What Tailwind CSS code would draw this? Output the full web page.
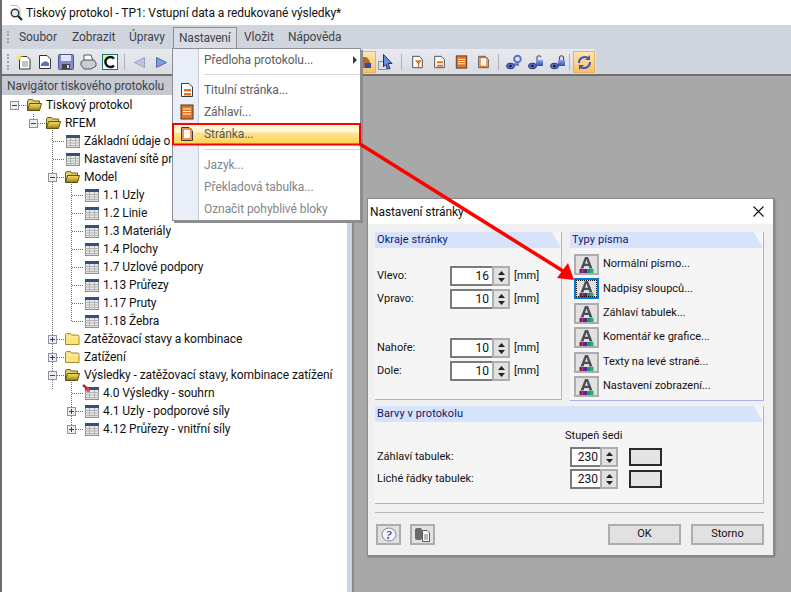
<!DOCTYPE html>
<html lang="cs">
<head>
<meta charset="utf-8">
<script src="https://cdn.jsdelivr.net/npm/@tailwindcss/browser@4"></script>
</head>
<body class="m-0">
<svg class="absolute w-0 h-0" width="0" height="0">
  <defs>
    <linearGradient id="fy" x1="0" y1="0" x2="0" y2="1"><stop offset="0" stop-color="#f2da6e"/><stop offset=".55" stop-color="#cdb036"/><stop offset="1" stop-color="#857117"/></linearGradient>
    <linearGradient id="fb" x1="0" y1="0" x2="0" y2="1"><stop offset="0" stop-color="#8ea6ea"/><stop offset="1" stop-color="#2f49b0"/></linearGradient>
    <symbol id="fopen" viewBox="0 0 16 14"><path d="M1.500 12.500V3l1-1.500h4l1 1.500h6v2.500" fill="#e2cd62" stroke="#6e5f18"/><path d="M1.500 12.500L3.500 5.500H15.500L13.500 12.500Z" fill="url(#fy)" stroke="#5f5113"/></symbol>
    <symbol id="fclosed" viewBox="0 0 16 14"><path d="M1.500 12.500V2.500l1-1h4l1 1.500h6.500l1 1v8.500Z" fill="#fbe27a" stroke="#a68c2c"/><path d="M2.500 5h12" stroke="#fff3b5"/></symbol>
    <symbol id="table" viewBox="0 0 14 13"><rect x=".5" y=".5" width="13" height="12" fill="#e9e9e9" stroke="#8a8a8a"/><rect x="0" y="0" width="14" height="3" fill="#34507c"/><path d="M0 5.500h14M0 8h14M0 10.500h14M4.500 3v10M9.500 3v10" stroke="#b2b2b2"/></symbol>
    <symbol id="plus" viewBox="0 0 9 9"><rect x=".5" y=".5" width="8" height="8" fill="#eceef3" stroke="#8f939b"/><path d="M2 4.500h5M4.500 2v5" stroke="#2c3f86"/></symbol>
    <symbol id="minus" viewBox="0 0 9 9"><rect x=".5" y=".5" width="8" height="8" fill="#eceef3" stroke="#8f939b"/><path d="M2 4.500h5" stroke="#2c3f86"/></symbol>
    <symbol id="fonticon" viewBox="0 0 17 17"><path d="M2.500 12.500L7 1H10L14.500 12.500H11.500L10.700 10H6.300L5.500 12.500ZM7 7.800H10L8.500 3.500Z" fill="#4a5058"/><rect x="1.500" y="13" width="3" height="4" fill="#8e1b3b"/><rect x="4.500" y="13" width="2.500" height="4" fill="#7d1f8c"/><rect x="7" y="13" width="2.500" height="4" fill="#3a22b0"/><rect x="9.500" y="13" width="2.500" height="4" fill="#188f72"/><rect x="12" y="13" width="3.500" height="4" fill="#23b063"/></symbol>
    <symbol id="up" viewBox="0 0 7 4"><path d="M3.500 0L7 4H0Z" fill="#222"/></symbol>
    <symbol id="docline" viewBox="0 0 14 16"><path d="M1.500 1.500H9L12.500 5V14.500H1.500Z" fill="#fff" stroke="#3b3b3b"/></symbol>
    <symbol id="link" viewBox="0 0 16 16"><ellipse cx="4.500" cy="12" rx="4" ry="2.800" fill="#5d74cf" stroke="#29346b"/><circle cx="4.500" cy="12" r="1.300" fill="#111"/><path d="M8 10.500h5" stroke="#5d74cf" stroke-width="2.500"/></symbol>
  </defs>
</svg>

<div class="relative w-[791px] h-[592px] overflow-hidden bg-[#a8a8a8] flex flex-col border-l-2 border-[#6e6e6e] font-['Roboto','Liberation_Sans',sans-serif] text-[12px] text-[#111]">
  <!-- title bar -->
  <div class="h-[25px] shrink-0 bg-white flex items-center pl-[6px]">
    <svg class="w-[16px] h-[18px]" viewBox="0 0 16 18"><path d="M2.500 1.500H9L12 4.500V13" fill="#fff" stroke="#b9b9b9"/><circle cx="7" cy="9" r="3.800" fill="#dcecf7" stroke="#333" stroke-width="1.400"/><path d="M10 12l4 4" stroke="#222" stroke-width="2.200"/></svg>
    <span class="ml-[2px] tracking-[-.07px] whitespace-nowrap">Tiskový protokol - TP1: Vstupní data a redukované výsledky*</span>
  </div>
  <!-- menu bar -->
  <div class="h-[24px] shrink-0 bg-[#d0d4dd] flex items-center text-[#40444a] pl-[5px]">
    <span class="w-[2px] h-[12px] mr-[10px] border-l-2 border-dotted border-[#9da2ac]"></span>
    <span class="w-[53px] tracking-[-.05px]">Soubor</span>
    <span class="w-[57px] tracking-[-.05px]">Zobrazit</span>
    <span class="w-[115px] tracking-[-.05px]">Úpravy</span>
    <span class="w-[44px] tracking-[-.05px]">Vložit</span>
    <span class="tracking-[-.07px]">Nápověda</span>
  </div>
  <!-- toolbar -->
  <div class="h-[26px] shrink-0 bg-[#d0d4dd]">
    <div class="h-[26px] w-[594px] rounded-tr-[3px] bg-gradient-to-b from-[#e8eaef] to-[#d8dbe2] flex items-center pl-[5px]">
      <span class="w-[2px] h-[16px] mr-[7px] border-l-2 border-dotted border-[#9da2ac]"></span>
      <svg class="w-[16px] h-[16px] mr-[6px]" viewBox="0 0 16 16"><path d="M3.500 2.500H11L14 5.500V15H3.500Z" fill="#fff" stroke="#333"/><path d="M6 8h6M6 10h6M6 12h6" stroke="#888"/><path d="M3.500 0L4.500 2.500 7 2.500 5 4.500 6 7 3.500 5.500 1 7 2 4.500 0 2.500 2.500 2.500Z" fill="#f6e94b"/></svg>
      <svg class="w-[14px] h-[16px] mr-[6px]" viewBox="0 0 14 16"><path d="M1.500 1.500H9L12.500 5V14.500H1.500Z" fill="#fff" stroke="#333"/><path d="M3 10q4-5 8-1v3H3Z" fill="#5577b5"/></svg>
      <svg class="w-[16px] h-[16px] mr-[6px]" viewBox="0 0 16 16"><rect x=".5" y=".5" width="15" height="15" rx="1" fill="#7f89d0" stroke="#4e5690"/><rect x="3" y="1" width="10" height="6" fill="#e3e5f4"/><rect x="4" y="10" width="8" height="5" fill="#444"/><rect x="9" y="11" width="2" height="3" fill="#ddd"/></svg>
      <svg class="w-[17px] h-[16px] mr-[5px]" viewBox="0 0 17 16"><path d="M4 1h7l2 6H4Z" fill="#fff" stroke="#555"/><path d="M1 8l3-2h10l2 3v3l-5 3H4L1 11Z" fill="#c9ccd4" stroke="#555"/></svg>
      <svg class="w-[16px] h-[16px]" viewBox="0 0 16 16"><rect x=".5" y=".5" width="15" height="15" fill="#fff" stroke="#0f7a78"/><path d="M1 1h6L1 8Z" fill="#f1ee65"/><path d="M12 4.500A5 5 0 1 0 12 11.500" fill="none" stroke="#111" stroke-width="2.500"/></svg>
      <span class="w-px h-[16px] bg-[#aeb2ba] ml-[6px] mr-[9px]"></span>
      <svg class="w-[11px] h-[11px] mr-[11px]" viewBox="0 0 11 11"><path d="M10.500 .5V10.500L.5 5.500Z" fill="#b9c6e6" stroke="#9aa3b5"/></svg>
      <svg class="w-[11px] h-[11px]" viewBox="0 0 11 11"><path d="M.5 .5V10.500L10.500 5.500Z" fill="#7c9be6" stroke="#56679a"/></svg>
      <!-- right part -->
      <span class="ml-auto flex items-center">
        <span class="w-[13px] h-[22px] mr-[2px] border border-l-0 border-[#e6b45c] bg-gradient-to-b from-[#ffe6ae] to-[#f9bf67] flex items-center">
          <svg class="w-[10px] h-[16px]" viewBox="0 0 10 16"><path d="M0 3h3q5 3 5 11H0Z" fill="#a5702c"/><path d="M2 9h6v5H2Z" fill="#2f49b0"/></svg>
        </span>
        <svg class="w-[16px] h-[16px] mr-[7px]" viewBox="0 0 16 16"><path d="M.5 7.500h8v8h-8Z" fill="#e1e1e1" stroke="#8d8d8d"/><path d="M5.500 0.500L14 9.500 10 9.500 12 14.500 9.500 15 8 10.500 5.500 13Z" fill="#6f8ddf" stroke="#1a2e66"/></svg>
        <span class="w-px h-[16px] bg-[#aeb2ba] mr-[9px]"></span>
        <svg class="w-[13px] h-[14px] mr-[9px]" viewBox="0 0 14 16"><use href="#docline"/><path d="M4 6h8L9 10v4H7.500v-4Z" fill="#e8731a"/></svg>
        <svg class="w-[13px] h-[14px] mr-[9px]" viewBox="0 0 14 16"><use href="#docline"/><path d="M4 7h7v2.500H4ZM4 11h7v2.500H4Z" fill="#e8731a"/></svg>
        <svg class="w-[13px] h-[14px] mr-[9px]" viewBox="0 0 14 16"><rect x="1" y="1" width="12" height="14" fill="#e8731a" stroke="#3b3b3b"/><path d="M3 5h8M3 7.500h8M3 10h8" stroke="#fff"/></svg>
        <svg class="w-[13px] h-[14px] mr-[8px]" viewBox="0 0 14 16"><use href="#docline"/><rect x="3" y="3" width="8" height="10" fill="#fff" stroke="#e8731a" stroke-width="1.500"/></svg>
        <span class="w-px h-[16px] bg-[#aeb2ba] mr-[7px]"></span>
        <svg class="w-[16px] h-[16px] mr-[6px]" viewBox="0 0 16 16"><use href="#link"/><circle cx="11.500" cy="5" r="3.300" fill="none" stroke="#5d74cf" stroke-width="2"/></svg>
        <svg class="w-[16px] h-[16px] mr-[6px]" viewBox="0 0 16 16"><use href="#link"/><rect x="8" y="6" width="7" height="6" fill="url(#fb)"/><path d="M9 6V3q2-2.500 4 0" fill="none" stroke="#555" stroke-width="1.200"/></svg>
        <svg class="w-[16px] h-[16px] mr-[3px]" viewBox="0 0 16 16"><use href="#link"/><rect x="8" y="6" width="7" height="6" fill="url(#fb)"/><path d="M9.500 6V3q2-2.500 4 0v3" fill="none" stroke="#555" stroke-width="1.200"/></svg>
        <span class="w-px h-[16px] bg-[#aeb2ba] mr-[3px]"></span>
        <span class="w-[22px] h-[22px] mr-[1px] border border-[#e6b45c] bg-gradient-to-b from-[#ffe6ae] to-[#f9bf67] flex items-center justify-center">
          <svg class="w-[17px] h-[17px]" viewBox="0 0 17 17"><path d="M3 9a6 6 0 0 1 10-4.500M14 8a6 6 0 0 1-10 4.500" fill="none" stroke="#3f59b8" stroke-width="2"/><path d="M14 1v5h-5ZM3 16v-5h5Z" fill="#3f59b8"/></svg>
        </span>
      </span>
    </div>
  </div>
  <!-- main -->
  <div class="flex-1 flex border-t-2 border-[#6f6f6f] min-h-0 -mt-[1px]">
    <div class="w-[350px] shrink-0 flex flex-col bg-white">
      <div class="h-[19px] shrink-0 bg-[#c5c9d2] text-[#40444a] flex items-center pl-[5px] tracking-[-.09px]">Navigátor tiskového protokolu</div>
      <div class="relative flex-1 flex pt-[1px]">
        <svg class="absolute left-0 top-0 w-[350px] h-[497px]" viewBox="2 95 350 497" shape-rendering="crispEdges">
          <path d="M33.500 114V119M52.500 128V371M52.500 380V389M71.500 182V321M71.500 380V429M19 105.500H26M38 123.500H45M53 141.500H65M53 159.500H65M57 177.500H64M57 339.500H64M57 357.500H64M57 375.500H64M72 195.500H84M72 213.500H84M72 231.500H84M72 249.500H84M72 267.500H84M72 285.500H84M72 303.500H84M72 321.500H84M72 393.500H84M76 411.500H84M76 429.500H84" fill="none" stroke="#6f6f6f" stroke-dasharray="1 1"/>
        </svg>
        <div class="relative flex-1 flex flex-col whitespace-nowrap text-[#111] tracking-[-.08px]">
          <div class="flex items-center h-[18px] pl-[8px]"><svg class="w-[9px] h-[9px]"><use href="#minus"/></svg><svg class="ml-[7px] w-[16px] h-[14px]"><use href="#fopen"/></svg><span class="ml-[4px]">Tiskový protokol</span></div>
          <div class="flex items-center h-[18px] pl-[27px]"><svg class="w-[9px] h-[9px]"><use href="#minus"/></svg><svg class="ml-[7px] w-[16px] h-[14px]"><use href="#fopen"/></svg><span class="ml-[4px]">RFEM</span></div>
          <div class="flex items-center h-[18px] pl-[64px]"><svg class="w-[14px] h-[13px]"><use href="#table"/></svg><span class="ml-[4px]">Základní údaje o modelu</span></div>
          <div class="flex items-center h-[18px] pl-[64px]"><svg class="w-[14px] h-[13px]"><use href="#table"/></svg><span class="ml-[4px]">Nastavení sítě prvků</span></div>
          <div class="flex items-center h-[18px] pl-[46px]"><svg class="w-[9px] h-[9px]"><use href="#minus"/></svg><svg class="ml-[7px] w-[16px] h-[14px]"><use href="#fopen"/></svg><span class="ml-[4px]">Model</span></div>
          <div class="flex items-center h-[18px] pl-[83px]"><svg class="w-[14px] h-[13px]"><use href="#table"/></svg><span class="ml-[4px]">1.1 Uzly</span></div>
          <div class="flex items-center h-[18px] pl-[83px]"><svg class="w-[14px] h-[13px]"><use href="#table"/></svg><span class="ml-[4px]">1.2 Linie</span></div>
          <div class="flex items-center h-[18px] pl-[83px]"><svg class="w-[14px] h-[13px]"><use href="#table"/></svg><span class="ml-[4px]">1.3 Materiály</span></div>
          <div class="flex items-center h-[18px] pl-[83px]"><svg class="w-[14px] h-[13px]"><use href="#table"/></svg><span class="ml-[4px]">1.4 Plochy</span></div>
          <div class="flex items-center h-[18px] pl-[83px]"><svg class="w-[14px] h-[13px]"><use href="#table"/></svg><span class="ml-[4px]">1.7 Uzlové podpory</span></div>
          <div class="flex items-center h-[18px] pl-[83px]"><svg class="w-[14px] h-[13px]"><use href="#table"/></svg><span class="ml-[4px]">1.13 Průřezy</span></div>
          <div class="flex items-center h-[18px] pl-[83px]"><svg class="w-[14px] h-[13px]"><use href="#table"/></svg><span class="ml-[4px]">1.17 Pruty</span></div>
          <div class="flex items-center h-[18px] pl-[83px]"><svg class="w-[14px] h-[13px]"><use href="#table"/></svg><span class="ml-[4px]">1.18 Žebra</span></div>
          <div class="flex items-center h-[18px] pl-[46px]"><svg class="w-[9px] h-[9px]"><use href="#plus"/></svg><svg class="ml-[7px] w-[16px] h-[14px]"><use href="#fclosed"/></svg><span class="ml-[4px]">Zatěžovací stavy a kombinace</span></div>
          <div class="flex items-center h-[18px] pl-[46px]"><svg class="w-[9px] h-[9px]"><use href="#plus"/></svg><svg class="ml-[7px] w-[16px] h-[14px]"><use href="#fclosed"/></svg><span class="ml-[4px]">Zatížení</span></div>
          <div class="flex items-center h-[18px] pl-[46px]"><svg class="w-[9px] h-[9px]"><use href="#minus"/></svg><svg class="ml-[7px] w-[16px] h-[14px]"><use href="#fopen"/></svg><span class="ml-[4px]">Výsledky - zatěžovací stavy, kombinace zatížení</span></div>
          <div class="flex items-center h-[18px] pl-[83px]"><span class="relative"><svg class="block w-[14px] h-[13px]"><use href="#table"/></svg><svg class="absolute -left-[3px] -top-[3px] w-[9px] h-[9px]" viewBox="0 0 9 9"><path d="M1 1l6 5" stroke="#b8293a" stroke-width="2.500"/><circle cx="6" cy="6" r="2" fill="#d84a55"/></svg></span><span class="ml-[4px]">4.0 Výsledky - souhrn</span></div>
          <div class="flex items-center h-[18px] pl-[65px]"><svg class="w-[9px] h-[9px]"><use href="#plus"/></svg><svg class="ml-[9px] w-[14px] h-[13px]"><use href="#table"/></svg><span class="ml-[4px]">4.1 Uzly - podporové síly</span></div>
          <div class="flex items-center h-[18px] pl-[65px]"><svg class="w-[9px] h-[9px]"><use href="#plus"/></svg><svg class="ml-[9px] w-[14px] h-[13px]"><use href="#table"/></svg><span class="ml-[4px]">4.12 Průřezy - vnitřní síly</span></div>
        </div>
        <div class="w-[5px] shrink-0 bg-[#cdd3df]"></div>
      </div>
    </div>
    <div class="flex-1 border-l-2 border-[#8a8a8a]"></div>
  </div>

  <!-- open menu -->
  <div class="absolute left-[171px] top-[27px] w-[64px] h-[22px] bg-[#d9dce3] border border-b-0 border-[#8d8f94] text-[#40444a] pl-[5px] leading-[20px] tracking-[-.2px] z-10">Nastavení</div>
  <div class="absolute left-[170px] top-[48px] w-[189px] h-[173px] bg-white border border-[#8d8f94] text-[#54585f] shadow-[2px_2px_0_#8d8d8d] z-10">
    <div class="absolute left-0 top-0 bottom-0 w-[26px] bg-[#e9eef8] border-r border-[#c7cbd2]"></div>
    <div class="relative flex flex-col tracking-[-.07px]">
      <div class="h-[22px] flex items-center pl-[31px] text-[#5a5e66]">Předloha protokolu...<span class="ml-auto mr-[3px] w-0 h-0 border-y-[4px] border-y-transparent border-l-[4px] border-l-[#3a3a3a]"></span></div>
      <div class="ml-[31px] h-px bg-[#d5d7db] mt-[3px] mb-[4px]"></div>
      <div class="h-[22px] flex items-center text-[#5a5e66]"><svg class="ml-[7px] w-[14px] h-[16px]" viewBox="0 0 14 16"><use href="#docline"/><path d="M4 7h7v2.500H4ZM4 11h7v2.500H4Z" fill="#e8731a"/></svg><span class="ml-[10px]">Titulní stránka...</span></div>
      <div class="h-[22px] flex items-center text-[#5a5e66]"><svg class="ml-[7px] w-[14px] h-[16px]" viewBox="0 0 14 16"><rect x="1" y="1" width="12" height="14" fill="#e8731a" stroke="#3b3b3b"/><path d="M3 5h8M3 7.500h8M3 10h8" stroke="#fff"/></svg><span class="ml-[10px]">Záhlaví...</span></div>
      <div class="h-[21px] flex items-center bg-gradient-to-b from-[#fff6d4] from-40% via-[#fde28f] via-50% to-[#ffd24a] text-[#54585f]"><svg class="ml-[7px] w-[14px] h-[16px]" viewBox="0 0 14 16"><use href="#docline"/><rect x="3" y="3" width="8" height="10" fill="#fff" stroke="#e8731a" stroke-width="1.500"/></svg><span class="ml-[10px]">Stránka...</span></div>
      <div class="ml-[31px] h-px bg-[#d5d7db] mt-[5px] mb-[3px]"></div>
      <div class="h-[22px] flex items-center pl-[31px] text-[#82858b] mt-[1px]">Jazyk...</div>
      <div class="h-[22px] flex items-center pl-[31px] text-[#82858b]">Překladová tabulka...</div>
      <div class="h-[22px] flex items-center pl-[31px] text-[#82858b]">Označit pohyblivé bloky</div>
    </div>
  </div>

  <!-- dialog -->
  <div class="absolute left-[365px] top-[198px] w-[407px] h-[358px] bg-[#f0f0f0] border border-[#8b8b8b] shadow-[1px_1px_2px_#777] flex flex-col z-20 text-[#111] text-[11px]">
    <div class="h-[25px] shrink-0 bg-white flex items-center pl-[2px] pr-[9px] text-[12px] tracking-[-.1px]">
      <span>Nastavení stránky</span>
      <svg class="ml-auto w-[11px] h-[11px]" viewBox="0 0 11 11"><path d="M.5 .5L10.500 10.500M10.500 .5L.5 10.500" stroke="#111" stroke-width="1.100"/></svg>
    </div>
    <div class="flex gap-[8px] pl-[7px] pt-[8px]">
      <div class="w-[187px] h-[168px] bg-[#f5f5f5] border-r border-b border-[#aab0e6] flex flex-col">
        <div class="h-[16px] bg-[#d7e3fb] text-[#14146e] pl-[2px] leading-[16px] [clip-path:polygon(0_0,calc(100%-9px)_0,100%_100%,0_100%)] tracking-[.1px]">Okraje stránky</div>
        <div class="flex items-center h-[20px] mt-[18px] pl-[2px]"><span class="w-[73px]">Vlevo:</span><span class="w-[42px] h-[20px] bg-white border-2 border-r-0 border-[#7a7a7a] flex items-center justify-end pr-[3px] text-[12px]">16</span><span class="w-[18px] h-[20px] border-2 border-[#adadad] bg-[#e1e1e1] flex flex-col items-center justify-around py-[1px]"><svg class="w-[7px] h-[4px]"><use href="#up"/></svg><svg class="w-[7px] h-[4px] rotate-180"><use href="#up"/></svg></span><span class="ml-[4px]">[mm]</span></div>
        <div class="flex items-center h-[20px] mt-[3px] pl-[2px]"><span class="w-[73px]">Vpravo:</span><span class="w-[42px] h-[20px] bg-white border-2 border-r-0 border-[#7a7a7a] flex items-center justify-end pr-[3px] text-[12px]">10</span><span class="w-[18px] h-[20px] border-2 border-[#adadad] bg-[#e1e1e1] flex flex-col items-center justify-around py-[1px]"><svg class="w-[7px] h-[4px]"><use href="#up"/></svg><svg class="w-[7px] h-[4px] rotate-180"><use href="#up"/></svg></span><span class="ml-[4px]">[mm]</span></div>
        <div class="flex items-center h-[20px] mt-[29px] pl-[2px]"><span class="w-[73px]">Nahoře:</span><span class="w-[42px] h-[20px] bg-white border-2 border-r-0 border-[#7a7a7a] flex items-center justify-end pr-[3px] text-[12px]">10</span><span class="w-[18px] h-[20px] border-2 border-[#adadad] bg-[#e1e1e1] flex flex-col items-center justify-around py-[1px]"><svg class="w-[7px] h-[4px]"><use href="#up"/></svg><svg class="w-[7px] h-[4px] rotate-180"><use href="#up"/></svg></span><span class="ml-[4px]">[mm]</span></div>
        <div class="flex items-center h-[20px] mt-[3px] pl-[2px]"><span class="w-[73px]">Dole:</span><span class="w-[42px] h-[20px] bg-white border-2 border-r-0 border-[#7a7a7a] flex items-center justify-end pr-[3px] text-[12px]">10</span><span class="w-[18px] h-[20px] border-2 border-[#adadad] bg-[#e1e1e1] flex flex-col items-center justify-around py-[1px]"><svg class="w-[7px] h-[4px]"><use href="#up"/></svg><svg class="w-[7px] h-[4px] rotate-180"><use href="#up"/></svg></span><span class="ml-[4px]">[mm]</span></div>
      </div>
      <div class="w-[194px] h-[169px] bg-[#f5f5f5] border-r border-b border-[#aab0e6] flex flex-col">
        <div class="h-[16px] bg-[#d7e3fb] text-[#14146e] pl-[2px] leading-[16px] [clip-path:polygon(0_0,calc(100%-9px)_0,100%_100%,0_100%)] tracking-[.1px]">Typy písma</div>
        <div class="flex flex-col gap-[3.400px] pl-[4px] pt-[6px]">
          <div class="flex items-center"><span class="w-[25px] h-[21px] bg-[#e1e1e1] border-2 border-[#adadad] flex items-center justify-center"><svg class="w-[17px] h-[17px]"><use href="#fonticon"/></svg></span><span class="ml-[4px]">Normální písmo...</span></div>
          <div class="flex items-center"><span class="w-[25px] h-[21px] bg-[#e1e1e1] border-2 border-[#0078d7] outline-1 -outline-offset-3 outline-dotted outline-[#111] flex items-center justify-center"><svg class="w-[17px] h-[17px]"><use href="#fonticon"/></svg></span><span class="ml-[4px]">Nadpisy sloupců...</span></div>
          <div class="flex items-center"><span class="w-[25px] h-[21px] bg-[#e1e1e1] border-2 border-[#adadad] flex items-center justify-center"><svg class="w-[17px] h-[17px]"><use href="#fonticon"/></svg></span><span class="ml-[4px]">Záhlaví tabulek...</span></div>
          <div class="flex items-center"><span class="w-[25px] h-[21px] bg-[#e1e1e1] border-2 border-[#adadad] flex items-center justify-center"><svg class="w-[17px] h-[17px]"><use href="#fonticon"/></svg></span><span class="ml-[4px]">Komentář ke grafice...</span></div>
          <div class="flex items-center"><span class="w-[25px] h-[21px] bg-[#e1e1e1] border-2 border-[#adadad] flex items-center justify-center"><svg class="w-[17px] h-[17px]"><use href="#fonticon"/></svg></span><span class="ml-[4px]">Texty na levé straně...</span></div>
          <div class="flex items-center"><span class="w-[25px] h-[21px] bg-[#e1e1e1] border-2 border-[#adadad] flex items-center justify-center"><svg class="w-[17px] h-[17px]"><use href="#fonticon"/></svg></span><span class="ml-[4px]">Nastavení zobrazení...</span></div>
        </div>
      </div>
    </div>
    <div class="ml-[7px] mt-[5px] w-[389px] h-[98px] bg-[#f5f5f5] border-r border-b border-[#aab0e6] flex flex-col relative">
      <div class="h-[16px] bg-[#d7e3fb] text-[#14146e] pl-[2px] leading-[16px] [clip-path:polygon(0_0,calc(100%-9px)_0,100%_100%,0_100%)] tracking-[.1px]">Barvy v protokolu</div>
      <div class="pl-[190px] h-[25px] leading-[28px]">Stupeň šedi</div>
      <div class="flex items-center h-[20px] pl-[2px]"><span class="w-[193px]">Záhlaví tabulek:</span><span class="w-[30px] h-[20px] bg-white border-2 border-r-0 border-[#7a7a7a] flex items-center justify-end pr-[2px] text-[12px]">230</span><span class="w-[18px] h-[20px] border-2 border-[#adadad] bg-[#e1e1e1] flex flex-col items-center justify-around py-[1px]"><svg class="w-[7px] h-[4px]"><use href="#up"/></svg><svg class="w-[7px] h-[4px] rotate-180"><use href="#up"/></svg></span><span class="ml-[11px] w-[33px] h-[18px] bg-[#e4e4e4] border-2 border-[#2a2a2a]"></span></div>
      <div class="flex items-center h-[20px] mt-[2px] pl-[2px]"><span class="w-[193px]">Liché řádky tabulek:</span><span class="w-[30px] h-[20px] bg-white border-2 border-r-0 border-[#7a7a7a] flex items-center justify-end pr-[2px] text-[12px]">230</span><span class="w-[18px] h-[20px] border-2 border-[#adadad] bg-[#e1e1e1] flex flex-col items-center justify-around py-[1px]"><svg class="w-[7px] h-[4px]"><use href="#up"/></svg><svg class="w-[7px] h-[4px] rotate-180"><use href="#up"/></svg></span><span class="ml-[11px] w-[33px] h-[18px] bg-[#e4e4e4] border-2 border-[#2a2a2a]"></span></div>
    </div>
    <div class="ml-[7px] mt-[8px] w-[389px] h-[1px] bg-[#b5b5b5]"></div>
    <div class="flex items-center pl-[8px] mt-[11px]">
      <span class="w-[25px] h-[21px] bg-[#e1e1e1] border-2 border-[#adadad] flex items-center justify-center">
        <svg class="w-[16px] h-[16px]" viewBox="0 0 16 16"><ellipse cx="8" cy="7.500" rx="7" ry="6.500" fill="#f4f5f8" stroke="#888"/><text x="8" y="12" text-anchor="middle" font-size="12" font-weight="700" font-style="italic" fill="#3d4c9e" font-family="Liberation Serif">?</text></svg>
      </span>
      <span class="ml-[9px] w-[25px] h-[21px] bg-[#e1e1e1] border-2 border-[#adadad] flex items-center justify-center">
        <svg class="w-[17px] h-[15px]" viewBox="0 0 17 15"><rect x="1" y="1" width="7" height="12" rx="2" fill="#6a6a6a"/><path d="M8.500 3.500H13L15.500 6V14.500H8.500Z" fill="#fff" stroke="#555"/><path d="M10 8h4M10 10h4M10 12h4" stroke="#777"/></svg>
      </span>
      <span class="ml-auto w-[73px] h-[21px] bg-[#e1e1e1] border-2 border-[#adadad] flex items-center justify-center">OK</span>
      <span class="ml-[10px] mr-[9px] w-[73px] h-[21px] bg-[#e1e1e1] border-2 border-[#adadad] flex items-center justify-center">Storno</span>
    </div>
  </div>

  <!-- red annotation -->
  <svg class="absolute -left-[2px] top-0 w-[791px] h-[592px] z-30 pointer-events-none" viewBox="0 0 791 592">
    <rect x="173" y="124" width="187" height="20.500" fill="none" stroke="#f00" stroke-width="2"/>
    <path d="M360 144L563 271" stroke="#f00" stroke-width="3.500"/>
    <path d="M574 280L557 278 568 263Z" fill="#f00"/>
  </svg>
</div>
</body>
</html>
